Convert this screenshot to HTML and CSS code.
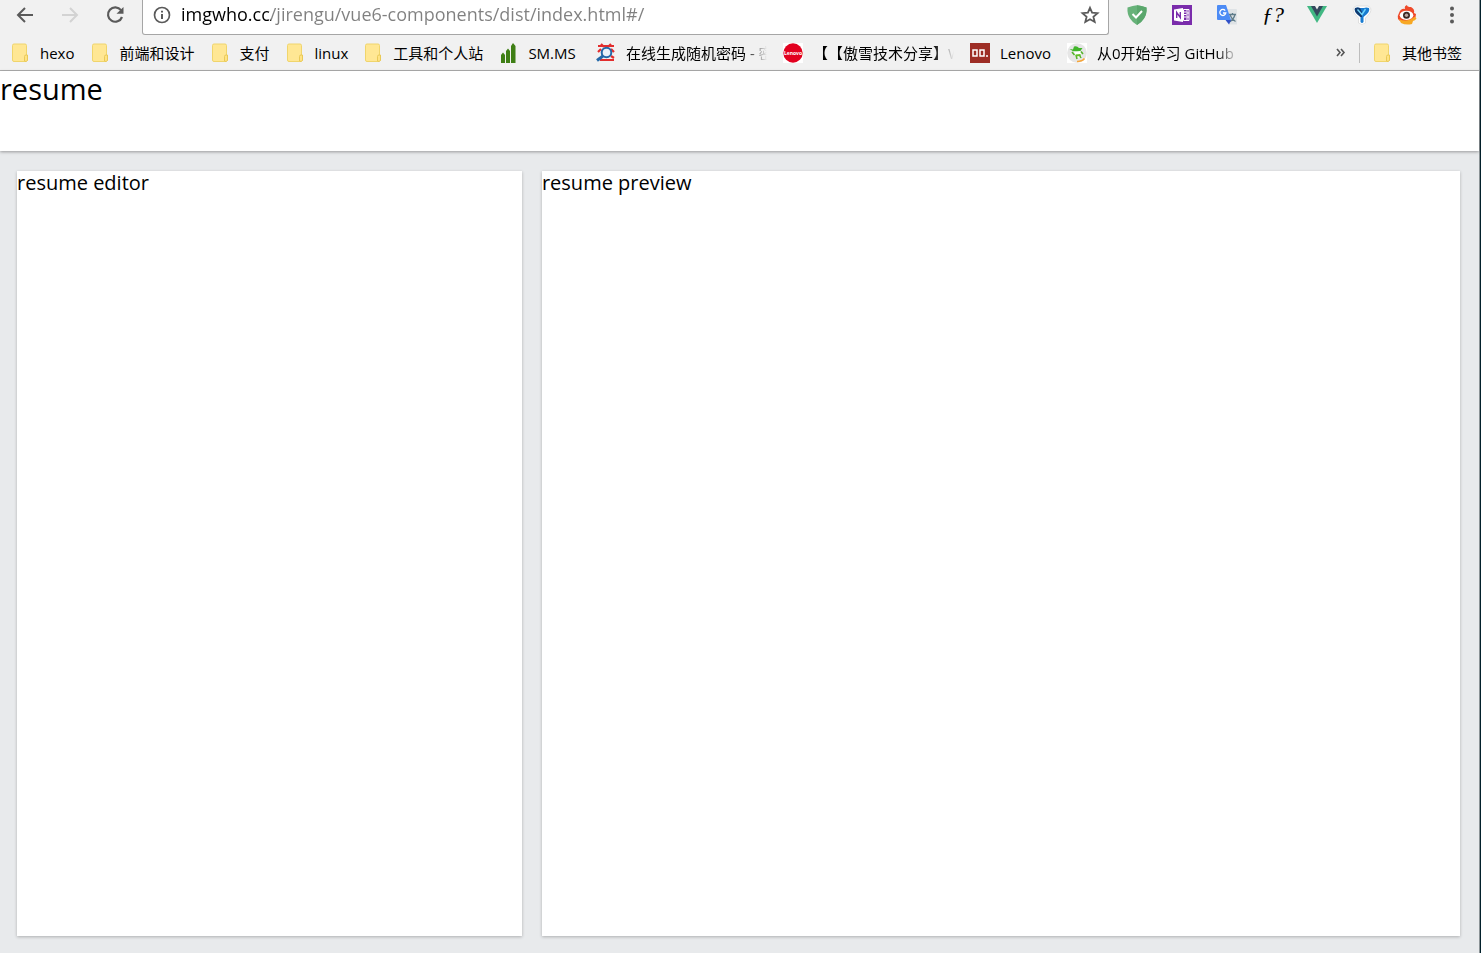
FILE: index.html
```html
<!DOCTYPE html>
<html lang="zh-CN">
<head>
<meta charset="utf-8">
<title>resume</title>
<link rel="stylesheet" href="styles.css">
</head>
<body>
<svg class="defs" aria-hidden="true">
  <symbol id="folder" viewBox="0 0 20 20">
    <path d="M2.5 2.5Q2.500 1 4 1H15Q16.500 1 16.500 2.500V12L17.500 13V17L16 18.500H4Q2.500 18.500 2.500 17Z" fill="#ffe794" stroke="#f0d56c"/>
    <path d="M14.500 18V13.500Q14.500 12 16 12H17.500V17.500L16 18.500Z" fill="#ffe384" stroke="#e9c957"/>
  </symbol>
</svg>
<div class="window">
  <nav class="toolbar" aria-label="Browser">
    <button class="tool" aria-label="Back"><svg viewBox="0 0 20 20"><path d="M18 10H3M10 3L3 10L10 17" fill="none" stroke="#5a5a5a" stroke-width="2"/></svg></button>
    <button class="tool" aria-label="Forward" disabled><svg viewBox="0 0 20 20"><path d="M2 10H17M10 3L17 10L10 17" fill="none" stroke="#d3d3d3" stroke-width="2"/></svg></button>
    <button class="tool" aria-label="Reload"><svg viewBox="0 0 20 20"><path d="M16 5.200A7.200 7.200 0 1 0 17 12" fill="none" stroke="#5a5a5a" stroke-width="2.200"/><path d="M18.500 2V8.800H11.500Z" fill="#5a5a5a"/></svg></button>
    <div class="address">
      <button class="address-icon" aria-label="Site information"><svg viewBox="0 0 20 20"><circle cx="10" cy="10" r="7.500" fill="none" stroke="#5a5a5a" stroke-width="1.700"/><path d="M10 9V14M10 5.800V7.600" stroke="#5a5a5a" stroke-width="2"/></svg></button>
      <input class="url" type="text" aria-label="Address" value="imgwho.cc/jirengu/vue6-components/dist/index.html#/">
      <button class="address-icon" aria-label="Bookmark this page"><svg viewBox="0 0 20 20"><path d="M10 2.800L12.100 7.700L17.500 8.200L13.400 11.700L14.700 17L10 14.200L5.300 17L6.600 11.700L2.500 8.200L7.900 7.700Z" fill="none" stroke="#5a5a5a" stroke-width="1.800"/></svg></button>
    </div>
    <div class="extensions">
      <button class="ext" aria-label="Ad blocker"><svg viewBox="0 0 20 20"><path d="M.5 2.500Q6 .5 10 .3Q14 .5 19.500 2.500Q20 9 17 13.500Q14.500 17.500 10 20Q5.500 17.500 3 13.500Q0 9 .5 2.500Z" fill="#67b279"/><path d="M10 .3Q14 .5 19.500 2.500Q20 9 17 13.500Q14.500 17.500 10 20Z" fill="#5aa76c"/><path d="M5.500 9L9 12.500L15 6" fill="none" stroke="#fff" stroke-width="2"/></svg></button>
      <button class="ext" aria-label="OneNote"><svg viewBox="0 0 20 20"><path d="M0 0H20V20H0Z" fill="#7a2cab"/><path d="M11.500 4.500H17V15.500H11.500Z" fill="#7a2cab" stroke="#fff"/><path d="M12 7H14.500M12 9.500H14.500M12 12H14.500M15 4.500V15.500M15 8H17M15 12H17" stroke="#fff"/><path d="M2 4.500L11 3V17L2 15.500Z" fill="#fff"/><path d="M4.700 13V7.500L8.300 12.500V7" fill="none" stroke="#7a2cab" stroke-width="1.400"/></svg></button>
      <button class="ext" aria-label="Translate"><svg viewBox="0 0 20 20"><path d="M9 4H19Q20 4 20 5V19Q20 19.500 19 19.500H12Z" fill="#dfe3e6"/><path d="M12 9.500H19M15.500 8V9.500M18 9.500Q17 14 12.500 17M13 10Q14.500 14 18.500 16.500" fill="none" stroke="#607d8b" stroke-width="1.300"/><path d="M1 0H9L14 15H1Q0 15 0 14V1Q0 0 1 0Z" fill="#4c8bf5"/><path d="M8.500 15H14L12 19.500Z" fill="#3050c8"/><path d="M8.200 5.600A3 3 0 1 0 8.800 8H6" fill="none" stroke="#fff" stroke-width="1.300"/></svg></button>
      <button class="ext formula" aria-label="Font finder">ƒ?</button>
      <button class="ext" aria-label="Vue devtools"><svg viewBox="0 0 20 20"><path d="M0 1H20L10 18Z" fill="#41b883"/><path d="M4 1H16L10 11.500Z" fill="#35495e"/><path d="M8 1H12L10 4.500Z" fill="#f1f1f1"/></svg></button>
      <button class="ext" aria-label="Yslow"><svg viewBox="0 0 20 20"><path d="M4 1H16Q20.500 3 18 8L13.500 13V18Q10 21 6.500 18V13L2 8Q-.5 3 4 1Z" fill="#fff" stroke="#d0d0d0" stroke-width=".6"/><path d="M3 3Q6 2 8 3H12Q14 2 17 3Q18 6 15 9L11.500 12V17Q10 19 8.500 17V12L5 9Q2 6 3 3Z" fill="#187bd0"/><path d="M3 3Q6 2 8 3L10 7V12L8.500 12L5 9Q2 6 3 3Z" fill="#123b70"/><path d="M5.500 4.500L10 9.500L13.500 4" fill="none" stroke="#70d5fb" stroke-width="1.400"/></svg></button>
      <button class="ext" aria-label="Weibo"><svg viewBox="0 0 20 20"><path d="M2 8Q4 3 8 4Q7 1 10 0Q10 2 14 2Q18 4 17 8L19 9Q19 15 12 17Q4 18 1 14Q0 11 2 8Z" fill="#ef4a2a"/><path d="M2 14Q10 18 18 11.500L19.500 13.500Q18 15.500 16 16L15 19Q9 20.500 4 18Z" fill="#f7a823"/><ellipse cx="9.500" cy="10.300" rx="6.800" ry="4.600" fill="#fff"/><circle cx="9.500" cy="10.300" r="3.500" fill="#3a2722"/><circle cx="9.500" cy="10.300" r="1.700" fill="#b9a5a0"/></svg></button>
      <button class="ext" aria-label="Menu"><svg viewBox="0 0 20 20"><g fill="#5a5a5a"><circle cx="10" cy="3.500" r="2"/><circle cx="10" cy="10" r="2"/><circle cx="10" cy="16.500" r="2"/></g></svg></button>
    </div>
  </nav>
  <nav class="bookmarks" aria-label="Bookmarks">
    <div class="group">
      <a class="bookmark" href="#"><svg viewBox="0 0 20 20"><use href="#folder"/></svg><span class="label">hexo</span></a>
      <a class="bookmark" href="#"><svg viewBox="0 0 20 20"><use href="#folder"/></svg><span class="label">前端和设计</span></a>
      <a class="bookmark" href="#"><svg viewBox="0 0 20 20"><use href="#folder"/></svg><span class="label">支付</span></a>
      <a class="bookmark" href="#"><svg viewBox="0 0 20 20"><use href="#folder"/></svg><span class="label">linux</span></a>
      <a class="bookmark" href="#"><svg viewBox="0 0 20 20"><use href="#folder"/></svg><span class="label">工具和个人站</span></a>
      <a class="bookmark" href="#"><svg viewBox="0 0 20 20"><path d="M3 20V12L5 9.500L7 12V20ZM8 20V8L10 5.500L12 8V20ZM13 20V3L15 0L17.500 3V20Z" fill="#3f7f15"/></svg><span class="label">SM.MS</span></a>
    </div>
    <a class="bookmark" href="#"><svg viewBox="0 0 20 20"><path d="M2 3H18M5 1L8 4M15 1L12 4M5 6L2 9M15 6L18 9M4 17H18M15 13L18 15" fill="none" stroke="#e22d2d" stroke-width="2.200"/><circle cx="10.500" cy="9.500" r="4.800" fill="#e9f2fa" stroke="#2468a8" stroke-width="2"/><path d="M7 13L1 17.500" stroke="#2468a8" stroke-width="3"/></svg><span class="label fade">在线生成随机密码 - 密码生成器</span></a>
    <a class="bookmark" href="#"><svg viewBox="0 0 20 20"><path d="M0 0H20V20H0Z" fill="#fff"/><circle cx="10" cy="10" r="9.700" fill="#e2001f"/><text class="badge-text" x="10" y="12" text-anchor="middle">Lenovo</text></svg><span class="label fade">【【傲雪技术分享】Windows</span></a>
    <a class="bookmark" href="#"><svg viewBox="0 0 20 20"><path d="M0 0H20V20H0Z" fill="#9d2d25"/><path d="M3 7H7V13H3ZM10 7H14V13H10ZM16 13H18" fill="none" stroke="#fff" stroke-width="1.500"/></svg><span class="label">Lenovo</span></a>
    <a class="bookmark" href="#"><svg viewBox="0 0 20 20"><path d="M0 0H20V20H0Z" fill="#fff"/><circle cx="10" cy="10" r="9.800" fill="#e6e6e6"/><path d="M2.500 6L6 6.500L7 3.500Q10 2.500 12 5L15.500 5L13 8.500Q8 10.500 2.500 6Z" fill="#41b52a"/><path d="M7 8.500L13.500 8L14.500 14L9 15Z" fill="#fff"/><path d="M5 9L7.500 12M14 8.500L16 11M9 12L10 16M12.500 12L14 15" fill="none" stroke="#55b52d" stroke-width="1.600"/><path d="M8.500 11.500L13.500 11V13L9 13.500Z" fill="#62bd27"/><path d="M10 18.500Q15 18.500 17.500 15.500" fill="none" stroke="#f6a53b" stroke-width="1.700"/></svg><span class="label fade">从0开始学习 GitHub 教程</span></a>
    <div class="other">
      <button class="more" aria-label="More bookmarks"><svg viewBox="0 0 20 20"><path d="M6 6L9 9.500L6 13M10 6L13 9.500L10 13" fill="none" stroke="#555" stroke-width="1.600"/></svg></button>
      <a class="bookmark divided" href="#"><svg viewBox="0 0 20 20"><use href="#folder"/></svg><span class="label">其他书签</span></a>
    </div>
  </nav>
  <header class="topbar"><span class="logo">resume</span></header>
  <main class="workspace">
    <section class="panel editor">resume editor</section>
    <section class="panel preview">resume preview</section>
  </main>
</div>
</body>
</html>
```
FILE: styles.css
```css
* { box-sizing: border-box; }
body {
  margin: 0;
  font-family: "Open Sans", "Noto Sans CJK SC", sans-serif;
  color: #000;
  background: #02202b;
}
button { padding: 0; border: 0; background: none; color: inherit; }
svg { display: block; width: 20px; height: 20px; flex: none; }
.defs { position: absolute; width: 0; height: 0; }
.window {
  display: flex;
  flex-direction: column;
  min-height: 100vh;
  margin-right: 1px;
  border-right: 1px solid #8b9396;
  background: #e8eaec;
}
.toolbar {
  display: flex;
  align-items: flex-start;
  height: 35px;
  padding-left: 15px;
  background: #f1f1f1;
}
.tool { width: 20px; height: 30px; margin-right: 25px; }
.tool:nth-child(3) { margin-right: 17px; }
.address {
  display: flex;
  flex: 1;
  align-items: flex-start;
  height: 35px;
  padding: 0 8px 0 9px;
  border: 1px solid #a6a6a6;
  border-top: 0;
  border-radius: 0 0 3px 3px;
  background: #fff;
}
.address-icon { height: 30px; }
.url {
  flex: 1;
  min-width: 0;
  height: 28px;
  margin-left: 9px;
  padding: 0;
  border: 0;
  outline: 0;
  font: 18px/28px "Open Sans", sans-serif;
  background: linear-gradient(to right, #000 90px, #808080 90px);
  background-clip: text;
  -webkit-background-clip: text;
  -webkit-text-fill-color: transparent;
}
.extensions { display: flex; gap: 25px; padding: 0 17px 0 18px; }
.ext { width: 20px; height: 29px; }
.formula { font: italic 22px/28px "Liberation Serif", serif; white-space: nowrap; }
.bookmarks {
  display: flex;
  align-items: center;
  gap: 16px;
  height: 36px;
  padding: 0 17px 0 10px;
  border-bottom: 1px solid #b0b0b0;
  background: #f1f1f1;
}
.group { display: flex; gap: 15px; min-width: 570px; }
.bookmark {
  display: flex;
  align-items: center;
  gap: 10px;
  color: #000;
  text-decoration: none;
  font-size: 15px;
  line-height: 24px;
}
.label { white-space: nowrap; text-spacing-trim: space-all; }
.fade {
  width: 141px;
  overflow: hidden;
  mask-image: linear-gradient(to right, #000 120px, transparent 141px);
}
.badge-text { font: bold 5px "Open Sans", sans-serif; fill: #fff; }
.other { display: flex; align-items: center; gap: 8px; margin-left: auto; }
.divided { padding-left: 12px; border-left: 1px solid #bdbdbd; line-height: 20px; }
.topbar {
  height: 80px;
  background: #fff;
  box-shadow: 0 1px 3px rgba(0, 0, 0, .35);
}
.logo { font-size: 29px; line-height: 36px; display: block; }
.workspace {
  display: flex;
  flex: 1;
  gap: 20px;
  padding: 20px 19px 17px 17px;
}
.panel {
  background: #fff;
  box-shadow: 0 1px 3px rgba(0, 0, 0, .25);
  font-size: 20px;
  line-height: 24px;
}
.editor { flex: 11 1 0; }
.preview { flex: 20 1 0; }
```
